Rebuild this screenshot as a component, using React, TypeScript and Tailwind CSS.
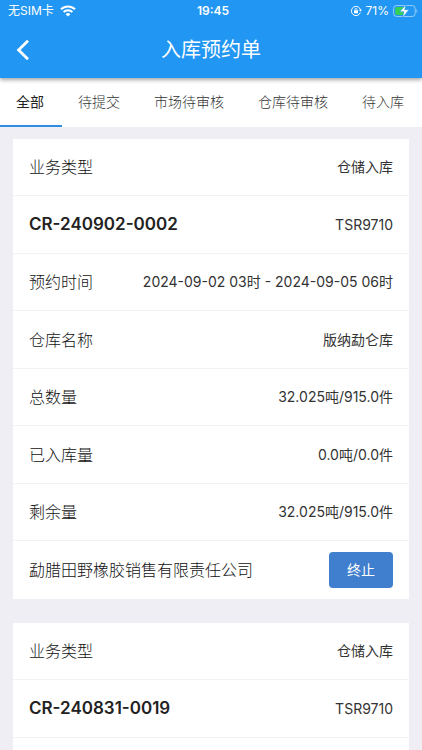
import { useState } from "react";

const TABS = ["全部", "待提交", "市场待审核", "仓库待审核", "待入库"];

interface Order {
  type: string;
  code: string;
  grade: string;
  details: { label: string; value: string }[];
  company?: string;
}

const ORDERS: Order[] = [
  {
    type: "仓储入库",
    code: "CR-240902-0002",
    grade: "TSR9710",
    details: [
      { label: "预约时间", value: "2024-09-02 03时 - 2024-09-05 06时" },
      { label: "仓库名称", value: "版纳勐仑库" },
      { label: "总数量", value: "32.025吨/915.0件" },
      { label: "已入库量", value: "0.0吨/0.0件" },
      { label: "剩余量", value: "32.025吨/915.0件" },
    ],
    company: "勐腊田野橡胶销售有限责任公司",
  },
  {
    type: "仓储入库",
    code: "CR-240831-0019",
    grade: "TSR9710",
    details: [],
  },
];

function StatusBar() {
  return (
    <div className="grid h-[22px] grid-cols-3 items-center pr-1 pl-2 text-[12px] leading-4">
      <div className="flex items-center gap-1.5">
        <span>无SIM卡</span>
        <svg width="16" height="12" viewBox="0 0 16 12" fill="none" stroke="currentColor" strokeWidth="2.1">
          <path d="M1 4.3a10 10 0 0 1 14 0" />
          <path d="M3.6 7.1a6.2 6.2 0 0 1 8.8 0" />
          <path d="M8 11.6 5.6 9.2a3.4 3.4 0 0 1 4.8 0z" fill="currentColor" stroke="none" />
        </svg>
      </div>
      <span className="text-center text-[12px] font-semibold">19:45</span>
      <div className="flex items-center justify-end gap-1">
        <svg width="12" height="12" viewBox="0 0 12 12" fill="none" stroke="currentColor">
          <path d="M10.3 7.6A4.6 4.6 0 1 1 10.5 5" />
          <path d="m8.8 5 1.8 1.6L12 4.8z" fill="currentColor" stroke="none" />
          <rect x="4" y="5.3" width="4" height="3" rx=".4" fill="currentColor" stroke="none" />
          <path d="M4.9 5.4v-.8a1.1 1.1 0 0 1 2.2 0v.8" strokeWidth=".8" />
        </svg>
        <span>71%</span>
        <svg width="25" height="14" viewBox="0 0 25 14" fill="none">
          <rect x=".6" y="1.5" width="21.6" height="11" rx="3" stroke="#fff" strokeOpacity=".5" />
          <path d="M23.4 5v4c1.2-.4 1.2-3.6 0-4z" fill="#fff" fillOpacity=".5" />
          <path d="M4 3h8.5v8H4a1.8 1.8 0 0 1-1.8-1.8V4.8A1.8 1.8 0 0 1 4 3z" fill="#34d058" />
          <path d="M12.9.6 6.7 7.7h4.2L9.6 13.4l6.4-7.6h-4.3z" fill="#fff" stroke="#2196f3" strokeWidth=".6" />
        </svg>
      </div>
    </div>
  );
}

function Row({ label, value }: { label: string; value: string }) {
  return (
    <div className="flex h-[57px] items-center justify-between border-b border-[#f3f3f4] px-4 even:h-[58px]">
      <dt className="text-base">{label}</dt>
      <dd className="text-sm font-normal text-[#333]">{value}</dd>
    </div>
  );
}

function OrderCard({ order }: { order: Order }) {
  return (
    <article className="bg-white last:flex-1">
      <dl>
        <Row label="业务类型" value={order.type} />
        <div className="flex h-[58px] items-center justify-between border-b border-[#f3f3f4] px-4">
          <dt className="text-[17px] font-semibold text-[#222]">{order.code}</dt>
          <dd className="text-sm font-normal text-[#333]">{order.grade}</dd>
        </div>
        {order.details.map((d) => (
          <Row key={d.label} label={d.label} value={d.value} />
        ))}
      </dl>
      {order.company && (
        <div className="flex h-[58px] items-center justify-between px-4">
          <span className="text-base">{order.company}</span>
          <button type="button" className="h-9 rounded bg-[#3f7fcd] px-[18px] text-sm font-normal text-white">
            终止
          </button>
        </div>
      )}
    </article>
  );
}

export default function App() {
  const [active, setActive] = useState(0);

  return (
    <div className="flex min-h-screen flex-col bg-[#efeef5] font-[Inter,'Noto_Sans_CJK_SC',sans-serif] font-light text-[#111]">
      <header className="relative z-10 bg-[#2196f3] font-normal text-white shadow-[0_2px_4px_rgba(0,0,0,0.35)]">
        <StatusBar />
        <div className="grid h-14 grid-cols-[56px_1fr_56px] items-center">
          <button type="button" aria-label="返回" className="flex h-14 items-center pl-4">
            <svg width="14" height="22" viewBox="0 0 14 22" fill="none" stroke="currentColor" strokeWidth="2.8">
              <path d="M12 1.8 2.6 11l9.4 9.2" />
            </svg>
          </button>
          <h1 className="text-center text-xl">入库预约单</h1>
        </div>
      </header>

      <nav className="flex h-[49px] shrink-0 overflow-hidden bg-white">
        {TABS.map((tab, i) => (
          <button
            key={tab}
            type="button"
            onClick={() => setActive(i)}
            className={`shrink-0 border-b-2 pr-[18px] pl-4 text-sm ${
              i === active ? "border-[#2f8ddf] font-normal text-[#222]" : "border-transparent text-[#333]"
            }`}
          >
            {tab}
          </button>
        ))}
      </nav>

      <main className="flex flex-1 flex-col gap-6 px-[13px] pt-3">
        {ORDERS.map((order) => (
          <OrderCard key={order.code} order={order} />
        ))}
      </main>
    </div>
  );
}
